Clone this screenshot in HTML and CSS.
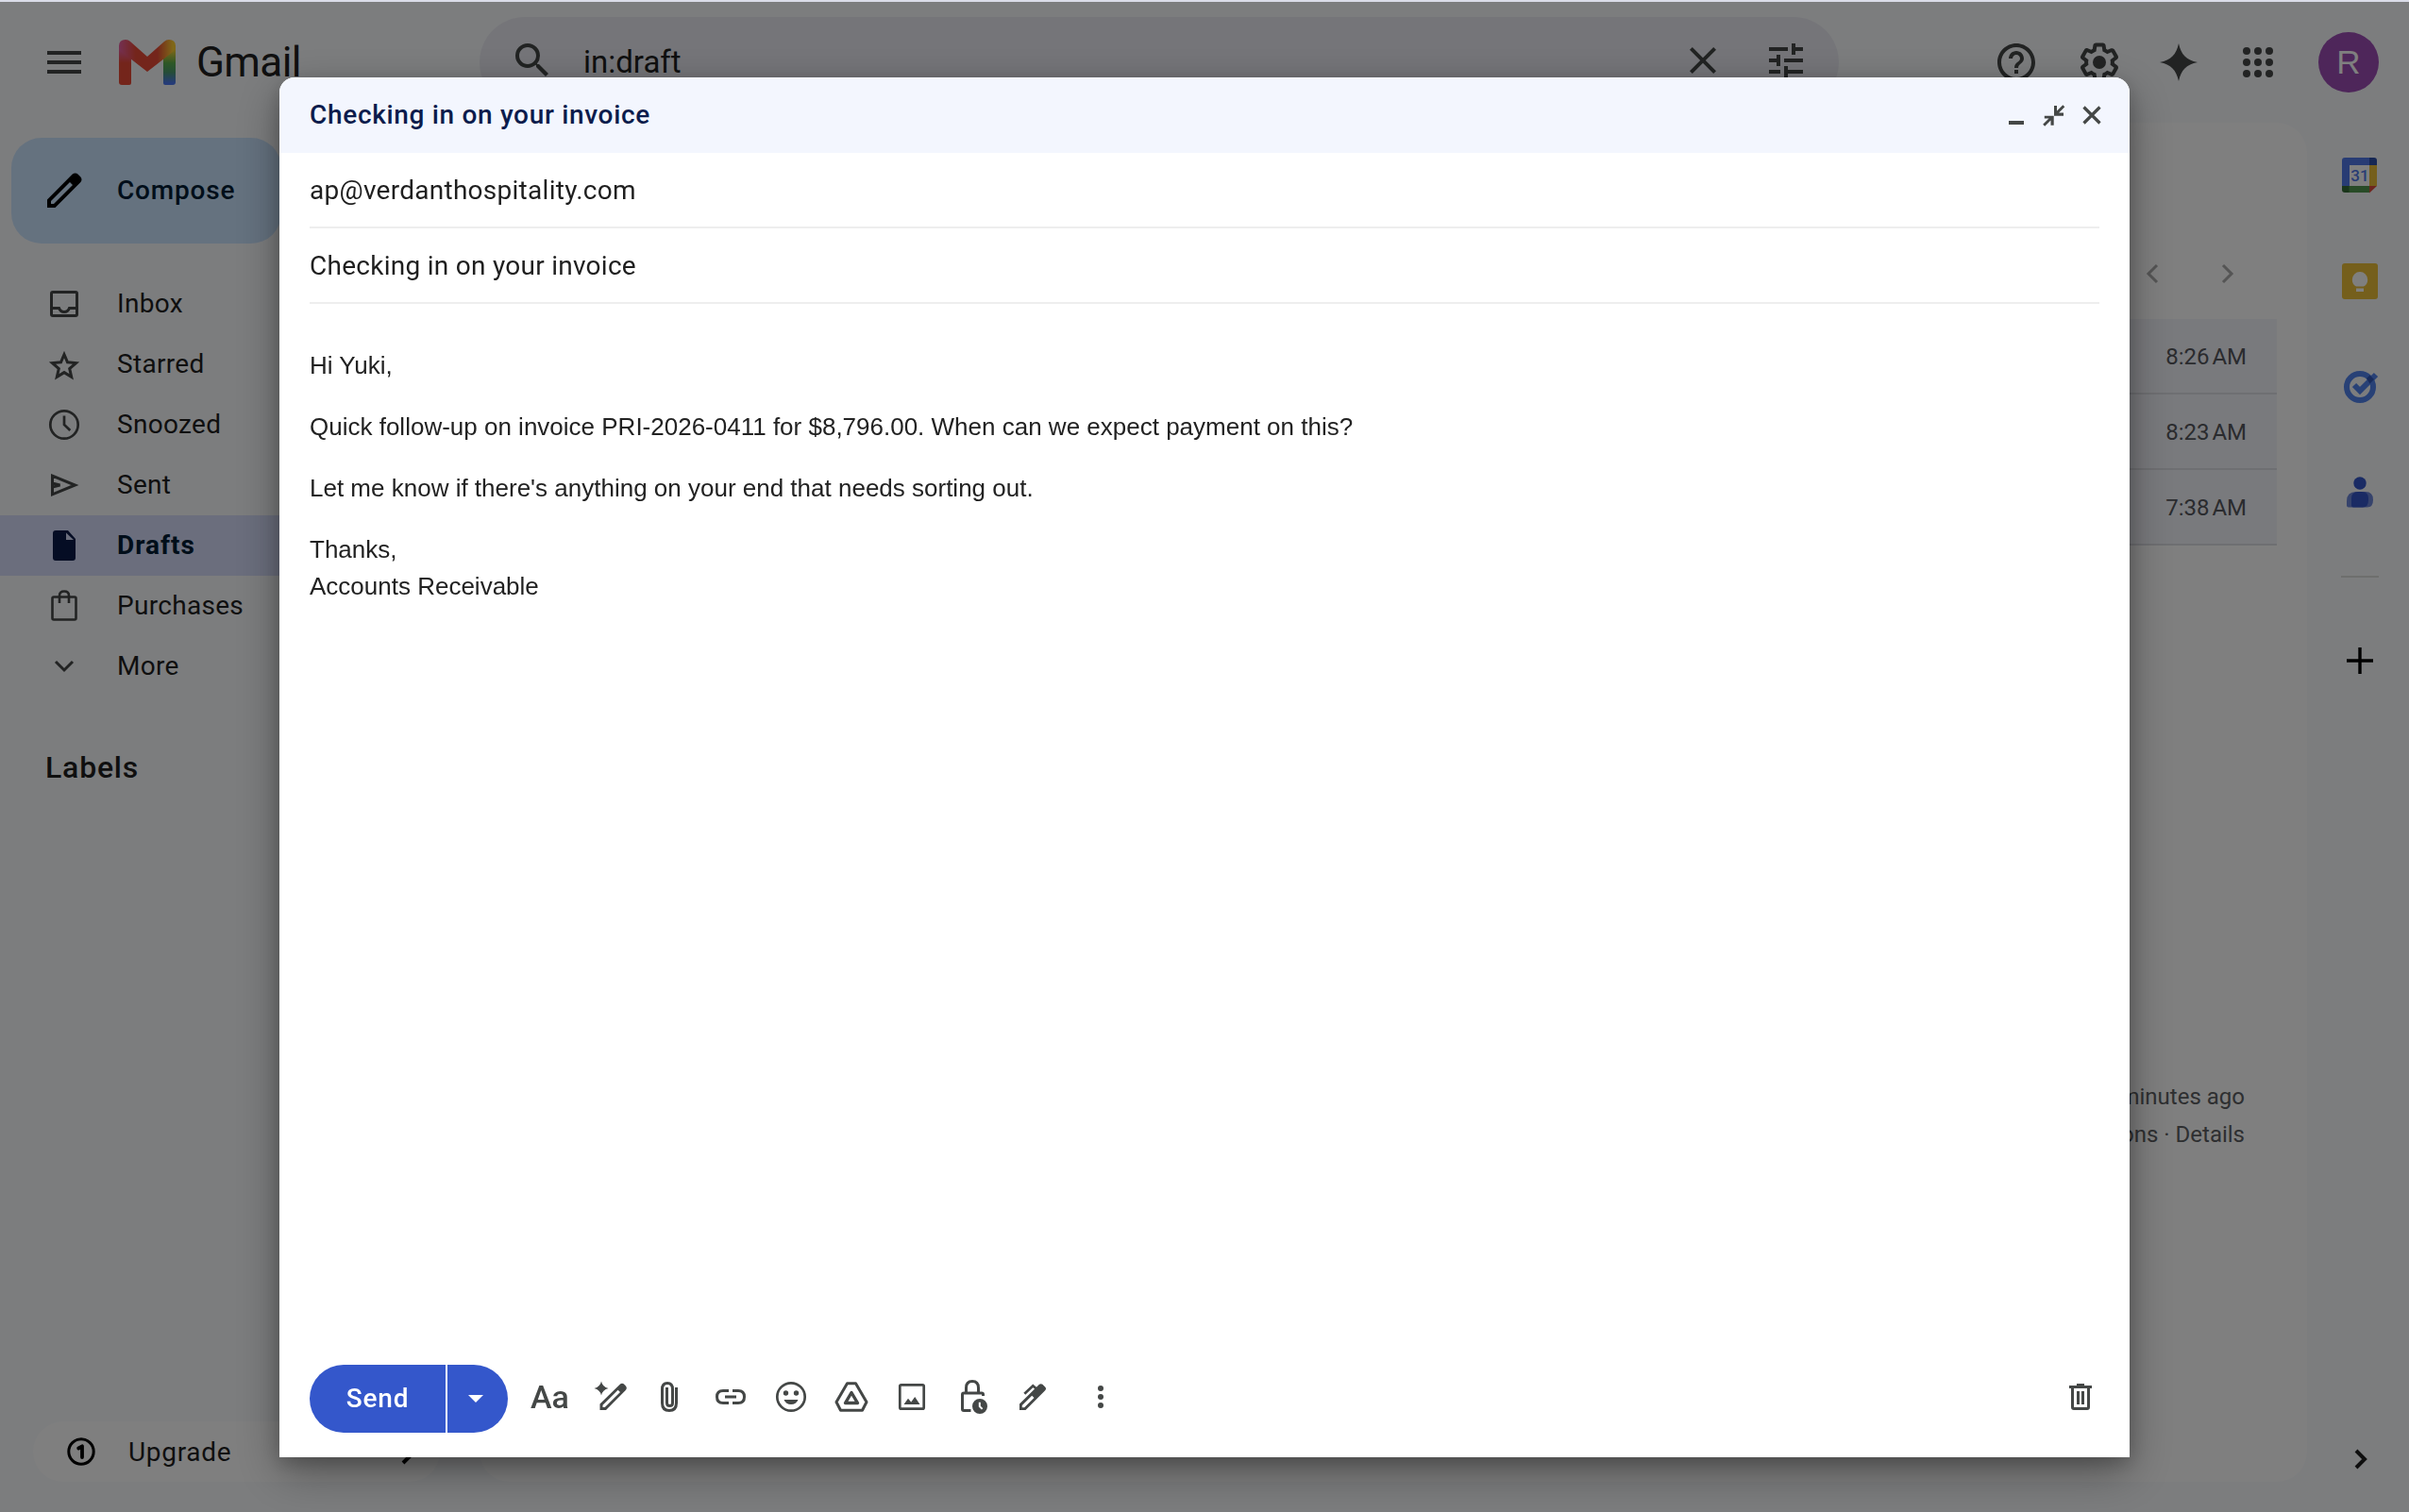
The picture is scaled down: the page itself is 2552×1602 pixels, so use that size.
FILE: index.html
```html
<!DOCTYPE html>
<html lang="en">
<head>
  <meta charset="UTF-8">
  <meta name="viewport" content="width=device-width, initial-scale=1.0">
  <title>Gmail</title>
  <link rel="stylesheet" href="styles.css">
</head>
<body>
  <div class="app">
    <header class="header">
      <div class="header-left">
        <svg class="icon" viewBox="0 0 24 24"><path d="M3 18h18v-2H3v2zm0-5h18v-2H3v2zm0-7v2h18V6H3z"/></svg>
        <svg class="logo" viewBox="0 0 60 48">
          <defs>
            <linearGradient id="legRight" x1="0" y1="0" x2="0" y2="1">
              <stop offset="0.1" stop-color="#ffcf30"/>
              <stop offset="0.45" stop-color="#5bb04c"/>
              <stop offset="0.68" stop-color="#4a9a70"/>
              <stop offset="0.95" stop-color="#4b77f0"/>
            </linearGradient>
            <linearGradient id="legTop" gradientUnits="userSpaceOnUse" x1="0" y1="4" x2="60" y2="4">
              <stop offset="0" stop-color="#e860a4"/>
              <stop offset="0.3" stop-color="#e84a36"/>
              <stop offset="0.68" stop-color="#e84a36"/>
              <stop offset="0.95" stop-color="#ffcf30"/>
            </linearGradient>
            <linearGradient id="legLeft" x1="0" y1="0" x2="0" y2="1">
              <stop offset="0.1" stop-color="#e860a4"/>
              <stop offset="0.45" stop-color="#e84a36"/>
            </linearGradient>
          </defs>
          <path fill="url(#legLeft)" d="M0 6h13v40q0 2-2 2H3q-3 0-3-3z"/>
          <path fill="url(#legRight)" d="M47 6h13v39q0 3-3 3h-8q-2 0-2-2z"/>
          <path fill="url(#legTop)" d="M0 7Q0 0 7 0q3 0 5 2l18 16L48 2q2-2 5-2 7 0 7 7 0 3-3 6L30 34 3 13Q0 10 0 7z"/>
        </svg>
        <span class="brand">Gmail</span>
      </div>
      <div class="search">
        <svg class="icon" viewBox="0 0 24 24"><path d="M15.5 14h-.79l-.28-.27A6.47 6.47 0 0 0 16 9.5 6.5 6.5 0 1 0 9.5 16c1.61 0 3.09-.59 4.23-1.57l.27.28v.79l5 4.99L20.49 19l-4.99-5zm-6 0C7.01 14 5 11.99 5 9.5S7.01 5 9.5 5 14 7.01 14 9.5 11.99 14 9.5 14z"/></svg>
        <span class="search-text">in:draft</span>
        <svg class="icon" viewBox="0 0 24 24"><path d="M19 6.41L17.59 5 12 10.59 6.41 5 5 6.41 10.59 12 5 17.59 6.41 19 12 13.41 17.59 19 19 17.59 13.41 12z"/></svg>
        <svg class="icon" viewBox="0 0 24 24"><path d="M3 17v2h6v-2H3zM3 5v2h10V5H3zm10 16v-2h8v-2h-8v-2h-2v6h2zM7 9v2H3v2h4v2h2V9H7zm14 4v-2H11v2h10zm-6-4h2V7h4V5h-4V3h-2v6z"/></svg>
      </div>
      <div class="header-right">
        <svg class="icon help" viewBox="0 0 24 24"><path d="M11 18h2v-2h-2v2zm1-16C6.48 2 2 6.48 2 12s4.48 10 10 10 10-4.48 10-10S17.52 2 12 2zm0 18c-4.41 0-8-3.59-8-8s3.59-8 8-8 8 3.59 8 8-3.59 8-8 8zm0-14c-2.21 0-4 1.79-4 4h2c0-1.1.9-2 2-2s2 .9 2 2c0 2-3 1.75-3 5h2c0-2.25 3-2.5 3-5 0-2.21-1.79-4-4-4z"/></svg>
        <svg class="icon settings" viewBox="0 0 24 24"><path d="M13.85 22.25h-3.7c-.74 0-1.36-.54-1.45-1.27l-.27-1.89c-.27-.14-.53-.29-.79-.46l-1.8.72c-.7.26-1.47-.03-1.81-.65L2.2 15.53c-.35-.66-.2-1.44.36-1.88l1.53-1.19c-.01-.15-.02-.3-.02-.46 0-.15.01-.31.02-.46l-1.52-1.19c-.59-.45-.74-1.26-.37-1.88l1.85-3.19c.34-.62 1.11-.9 1.79-.63l1.81.73c.26-.17.52-.32.78-.46l.27-1.91c.09-.7.71-1.25 1.44-1.25h3.7c.74 0 1.36.54 1.45 1.27l.27 1.89c.27.14.53.29.79.46l1.8-.72c.71-.26 1.48.03 1.82.65l1.84 3.18c.36.66.2 1.44-.36 1.88l-1.52 1.19c.01.15.02.3.02.46s-.01.31-.02.46l1.52 1.19c.56.45.72 1.23.37 1.86l-1.86 3.22c-.34.62-1.11.9-1.8.63l-1.8-.72c-.26.17-.52.32-.78.46l-.27 1.91c-.1.68-.72 1.22-1.46 1.22zm-3.23-2h2.76l.37-2.55.53-.22c.44-.18.88-.44 1.34-.78l.45-.34 2.38.96 1.38-2.4-2.03-1.58.07-.56c.03-.26.06-.51.06-.78s-.03-.53-.06-.78l-.07-.56 2.03-1.58-1.39-2.4-2.39.96-.45-.35c-.42-.32-.87-.58-1.33-.77l-.52-.22-.37-2.55h-2.76l-.37 2.55-.53.21c-.44.19-.88.44-1.34.79l-.45.33-2.38-.95-1.39 2.39 2.03 1.58-.07.56a7 7 0 0 0-.06.79c0 .26.02.53.06.78l.07.56-2.03 1.58 1.38 2.4 2.39-.96.45.35c.43.33.86.58 1.33.77l.53.22.38 2.55z"/><circle cx="12" cy="12" r="3.5"/></svg>
        <svg class="icon spark" viewBox="0 0 24 24"><path d="M12 2C13.300 8 16 10.700 22 12 16 13.300 13.300 16 12 22 10.700 16 8 13.300 2 12 8 10.700 10.700 8 12 2z"/></svg>
        <svg class="icon apps" viewBox="0 0 24 24"><circle cx="6" cy="6" r="2"/><circle cx="12" cy="6" r="2"/><circle cx="18" cy="6" r="2"/><circle cx="6" cy="12" r="2"/><circle cx="12" cy="12" r="2"/><circle cx="18" cy="12" r="2"/><circle cx="6" cy="18" r="2"/><circle cx="12" cy="18" r="2"/><circle cx="18" cy="18" r="2"/></svg>
        <div class="avatar">R</div>
      </div>
    </header>

    <div class="content">
      <aside class="sidebar">
        <div class="compose">
          <svg class="icon" viewBox="0 0 48 48"><path d="M6 42v-8.500L32.500 6.800q1.500-1.300 3.200-1.300t3 1.300l2.500 2.500q1.300 1.300 1.300 3t-1.300 3L14.500 42zM10 38h3L33 18l-3-3L10 35z"/></svg>
          <span>Compose</span>
        </div>
        <nav class="nav">
          <div class="nav-item">
            <svg class="nav-icon" viewBox="0 0 40 40"><path fill="none" stroke="currentColor" stroke-width="3" d="M8 7.500h24q1.500 0 1.500 1.500v22q0 1.500-1.500 1.500H8Q6.500 32.500 6.500 31V9Q6.500 7.500 8 7.500zM7 24.500h7.500q1.500 4 5.500 4t5.500-4H33"/></svg>
            <span>Inbox</span>
          </div>
          <div class="nav-item">
            <svg class="nav-icon" viewBox="0 0 40 40"><path fill="none" stroke="currentColor" stroke-width="3" d="M20 9.500l3.500 8.300 9 .8-6.800 5.900 2 8.800L20 28.600l-7.700 4.700 2-8.800-6.800-5.900 9-.8z"/></svg>
            <span>Starred</span>
          </div>
          <div class="nav-item">
            <svg class="nav-icon" viewBox="0 0 40 40"><circle cx="20" cy="20" r="14.700" fill="none" stroke="currentColor" stroke-width="2.700"/><path fill="none" stroke="currentColor" stroke-width="2.700" d="M20 10.500V20l6.300 6"/></svg>
            <span>Snoozed</span>
          </div>
          <div class="nav-item">
            <svg class="nav-icon" viewBox="0 0 40 40"><path fill="none" stroke="currentColor" stroke-width="3" d="M7.500 10.200L31.500 20 7.500 29.800zM7.500 18l8 2-8 2"/></svg>
            <span>Sent</span>
          </div>
          <div class="nav-item active">
            <svg class="nav-icon" viewBox="0 0 40 40"><path d="M10 4h14l8 9v20q0 3-3 3H11q-3 0-3-3V7q0-3 3-3zm12 2.500V14h8z" fill-rule="evenodd"/></svg>
            <span>Drafts</span>
          </div>
          <div class="nav-item">
            <svg class="nav-icon" viewBox="0 0 40 40"><path fill="none" stroke="currentColor" stroke-width="2.600" d="M9 10.500h22q1.500 0 1.500 1.500v21q0 1.500-1.500 1.500H9Q7.500 34.500 7.500 33V12q0-1.500 1.500-1.500zM15 17V9q0-4.500 5-4.500T25 9v8"/></svg>
            <span>Purchases</span>
          </div>
          <div class="nav-item">
            <svg class="nav-icon" viewBox="0 0 40 40"><path fill="none" stroke="currentColor" stroke-width="3" d="M11 15l9 9 9-9"/></svg>
            <span>More</span>
          </div>
        </nav>
        <div class="labels">Labels</div>
        <div class="upgrade">
          <svg class="upgrade-icon" viewBox="0 0 32 32"><circle cx="16" cy="16" r="13.200" fill="none" stroke="#000" stroke-width="3"/><path fill="none" stroke="#000" stroke-width="3.800" stroke-linecap="round" stroke-linejoin="round" d="M13.200 12.500L17 10.300V22"/></svg>
          <span>Upgrade</span>
          <svg class="icon upgrade-next" viewBox="0 0 48 48"><path fill="none" stroke="#000" stroke-width="4" d="M18 12l12 12-12 12"/></svg>
        </div>
      </aside>

      <main class="main">
        <div class="pager">
          <svg class="icon" viewBox="0 0 48 48"><path fill="none" stroke="currentColor" stroke-width="3" d="M29 15l-9 9 9 9"/></svg>
          <svg class="icon" viewBox="0 0 48 48"><path fill="none" stroke="currentColor" stroke-width="3" d="M19 15l9 9-9 9"/></svg>
        </div>
        <div class="mail-list">
          <div class="mail-row">8:26 AM</div>
          <div class="mail-row">8:23 AM</div>
          <div class="mail-row">7:38 AM</div>
        </div>
        <footer class="footer">
          <div>minutes ago</div>
          <div class="footer-links">ons · Details</div>
        </footer>
      </main>

      <aside class="rail">
        <svg class="icon" viewBox="0 0 48 48">
          <path fill="#fff" d="M10 10h28v28H10z"/>
          <path fill="#5079e8" d="M5 8q0-3 3-3h26v8H13v22H5z"/>
          <path fill="#2d4fa8" d="M34 5h5q3 0 3 3v5h-8z"/>
          <path fill="#eabf38" d="M34 13h8v22h-8z"/>
          <path fill="#50964f" d="M12 35h22v7H12z"/>
          <path fill="#356b36" d="M5 35h7.500v7H8q-3 0-3-3z"/>
          <path fill="#da4c3c" d="M34 35h8l-8 7.500z"/>
          <text x="24" y="29.500" text-anchor="middle" class="cal-day">31</text>
        </svg>
        <svg class="icon" viewBox="0 0 48 48">
          <rect x="5" y="5" width="38" height="38" rx="3" fill="#eabf38"/>
          <path fill="#fff" d="M20 29.500c-3-1.500-4.200-4-4.200-7.300a8.200 8.200 0 0 1 16.400 0c0 3.300-1.200 5.800-4.200 7.300zM20 31.500h8v3.500h-8z"/>
        </svg>
        <svg class="icon" viewBox="0 0 48 48">
          <circle cx="24" cy="24" r="14" fill="none" stroke="#5083ed" stroke-width="6"/>
          <path fill="none" stroke="#5083ed" stroke-width="6" d="M18 22l6 6 17-17"/>
          <path fill="#2f56b8" d="M31 15l3.500-3.500 4.500 4.500-4.500 4.500z"/>
        </svg>
        <svg class="icon" viewBox="0 0 48 48">
          <circle cx="24" cy="14" r="6.700" fill="#3557c8"/>
          <path fill="#6d86d8" d="M20 23h10q8 0 8 8.500T31 39.500H12q-2 0-2-2V33q0-10 10-10z"/>
          <path fill="#3557c8" d="M22 23h4q7 0 7 7v2q0 7.500-6 7.500H17q-2 0-2-2V30q0-7 7-7z"/>
        </svg>
        <div class="rail-divider"></div>
        <svg class="icon" viewBox="0 0 48 48"><path stroke="#000" stroke-width="3.400" d="M24 10v28M10 24h28"/></svg>
        <svg class="icon rail-toggle" viewBox="0 0 48 48"><path fill="none" stroke="#1f1f1f" stroke-width="4" d="M20 15l9 9-9 9"/></svg>
      </aside>
    </div>
  </div>

  <div class="overlay">
    <section class="dialog">
      <div class="dialog-header">
        <h2 class="dialog-title">Checking in on your invoice</h2>
        <svg class="dialog-icon" viewBox="0 0 32 32"><path d="M8 22h16v4H8z"/></svg>
        <svg class="dialog-icon" viewBox="0 0 32 32"><path d="M16 6h3v5.600l6.300-6.300 2 2-6.200 6.200H26v3.200H16zM15.700 16.700v10h-3.200v-5.300l-6.300 6.300-2-2 6.300-6.200H5.800v-2.800z"/></svg>
        <svg class="dialog-icon" viewBox="0 0 32 32"><path fill="none" stroke="currentColor" stroke-width="3.200" d="M7.500 7.500l17 17M24.500 7.500l-17 17"/></svg>
      </div>
      <div class="field">ap@verdanthospitality.com</div>
      <div class="field">Checking in on your invoice</div>
      <div class="message">
        <p>Hi Yuki,</p>
        <p>Quick follow-up on invoice PRI-2026-0411 for $8,796.00. When can we expect payment on this?</p>
        <p>Let me know if there's anything on your end that needs sorting out.</p>
        <p>Thanks,<br>Accounts Receivable</p>
      </div>
      <div class="toolbar">
        <div class="send">
          <div class="send-main">Send</div>
          <div class="send-more"><svg class="caret" viewBox="0 0 16 8"><path d="M0 0h16L8 8z"/></svg></div>
        </div>
        <div class="tools">
          <span class="tool format">Aa</span>
          <svg class="tool" viewBox="-1.500 0 40 40"><path d="M9.500 3.500q1.200 6 7.500 7.500-6.300 1.500-7.500 7.500Q8.300 12.500 2 11q6.300-1.500 7.500-7.500zM8 34v-6.500L29 7q1.200-1.200 2.500-1.200T34 7l1 1q1.300 1.300 1.300 2.700T35 13.300L14.500 34zM11 31h2.300L29.500 15l-2.400-2.300L11 28.700z" fill-rule="evenodd"/></svg>
          <svg class="tool" viewBox="0 0 40 40"><path fill="none" stroke="currentColor" stroke-width="3" d="M26.500 10v16.500q0 8-7.500 8t-7.500-8V12q0-6.500 5.500-6.500t5.500 6.500v14.500q0 3-3 3t-3-3V10"/></svg>
          <svg class="tool" viewBox="0 0 40 40"><path fill="none" stroke="currentColor" stroke-width="3" d="M18 13.500h-6q-6.500 0-6.500 6.500t6.500 6.500h6M22 13.500h6q6.500 0 6.500 6.500T28 26.500h-6M14 20h12"/></svg>
          <svg class="tool" viewBox="0 0 40 40"><circle cx="20" cy="20" r="14.700" fill="none" stroke="currentColor" stroke-width="2.700"/><circle cx="14.500" cy="16" r="2.700"/><circle cx="25.500" cy="16" r="2.700"/><path d="M12.500 23h15q-2 5-7.500 5t-7.500-5z"/></svg>
          <svg class="tool" viewBox="0 0 40 40"><path fill="none" stroke="currentColor" stroke-width="3" stroke-linejoin="round" d="M15.500 5.700h9L36 25.500l-4.500 8.800h-23L4 25.500z"/><path fill="none" stroke="currentColor" stroke-width="3.400" stroke-linejoin="round" d="M20 15.500l6.500 11h-13z"/></svg>
          <svg class="tool" viewBox="0 0 40 40"><rect x="7.300" y="7.300" width="25.400" height="25.400" rx="1.500" fill="none" stroke="currentColor" stroke-width="2.700"/><path d="M11.500 28l4.500-6.300 3.200 3.800 4-5.500 5.300 8z"/></svg>
          <svg class="tool" viewBox="0 0 40 40"><path fill="none" stroke="currentColor" stroke-width="3" d="M18.500 34.500H11Q9.500 34.500 9.500 33V17.500Q9.500 16 11 16h19q1.500 0 1.500 1.500V19M13.500 15v-4.500q0-7 6.500-7t6.500 7V15"/><path fill-rule="evenodd" d="M28 22a8 8 0 1 0 0 16 8 8 0 0 0 0-16zm-1.200 3.800h2v4l2.500 2.400-1.400 1.400-3.100-3z"/></svg>
          <svg class="tool" viewBox="0 0 40 40"><path fill-rule="evenodd" d="M6 34v-6.500L27 6.800q1.700-1.300 3.400 0l3 3q1.500 1.500 0 3.300L12.500 34zM8.800 31.300h2.400L21.500 21l-2.300-2.300L8.800 29z"/><path fill="none" stroke="currentColor" stroke-width="2.800" d="M11.300 16.800l9-8.500 4.500 4"/></svg>
          <svg class="tool dots" viewBox="0 0 40 40"><circle cx="20" cy="11" r="3"/><circle cx="20" cy="20" r="3"/><circle cx="20" cy="29" r="3"/></svg>
        </div>
        <svg class="tool trash" viewBox="0 0 40 40"><path fill="none" stroke="currentColor" stroke-width="3" d="M11.500 9v22q0 1.500 1.500 1.500h14q1.500 0 1.500-1.500V9"/><path d="M8 8h8V6h8v2h8v3H8zM16 14h3v14h-3zM21 14h3v14h-3z"/></svg>
      </div>
    </section>
  </div>
</body>
</html>
```
FILE: styles.css
```css
* {
  box-sizing: border-box;
}

html, body {
  margin: 0;
  padding: 0;
  height: 100%;
  overflow: hidden;
  background: #dadce8;
  font-family: Roboto, "Liberation Sans", sans-serif;
  font-size: 28px;
  color: #1f1f1f;
}

.app {
  height: 100%;
  border-top: 2px solid #dadce8;
  background: #f8fafd;
  display: flex;
  flex-direction: column;
}

.icon {
  width: 48px;
  height: 48px;
  fill: currentColor;
  flex: none;
}

/* header */
.header {
  height: 128px;
  flex: none;
  display: flex;
  align-items: center;
  color: #444746;
}

.header-left {
  width: 508px;
  padding-left: 44px;
  display: flex;
  align-items: center;
}

.logo {
  width: 60px;
  height: 48px;
  margin-left: 34px;
}

.brand {
  margin-left: 22px;
  font-size: 44px;
  letter-spacing: -0.6px;
  color: #202020;
}

.search {
  width: 1440px;
  height: 96px;
  padding: 0 32px;
  border-radius: 48px;
  background: #eaebf2;
  display: flex;
  align-items: center;
}

.search-text {
  flex: 1;
  margin-left: 30px;
  padding-bottom: 2px;
  font-size: 33px;
  color: #1f1f1f;
}

.search .icon {
  margin-bottom: 4px;
}

.search .icon + .icon {
  margin-left: 40px;
}

.header-right {
  display: flex;
  align-items: center;
}

.help { margin-left: 164px; }
.settings { margin-left: 40px; }
.spark, .apps { margin-left: 36px; }

.avatar {
  width: 64px;
  height: 64px;
  margin-left: 40px;
  border-radius: 50%;
  background: #9c4cb4;
  color: #fff;
  font-family: "Liberation Sans", Arial, sans-serif;
  font-size: 35px;
  display: flex;
  align-items: center;
  justify-content: center;
}

.content {
  flex: 1;
  min-height: 0;
  display: flex;
  padding-bottom: 32px;
}

/* sidebar */
.sidebar {
  width: 508px;
  flex: none;
  display: flex;
  flex-direction: column;
}

.compose {
  width: 286px;
  height: 112px;
  margin: 16px 0 0 12px;
  padding-left: 32px;
  border-radius: 32px;
  background: #cae4fe;
  color: #001d35;
  font-weight: 500;
  letter-spacing: 0.8px;
  display: flex;
  align-items: center;
  gap: 32px;
}

.compose .icon {
  fill: #000;
}

.compose span {
  padding-bottom: 2px;
}

.nav {
  margin-top: 32px;
}

.nav-item {
  height: 64px;
  padding-left: 48px;
  letter-spacing: 0.3px;
  display: flex;
  align-items: center;
  gap: 36px;
}

.nav-item span {
  padding-bottom: 2px;
}

.nav-item.active {
  background: #d6ddfa;
  color: #001d35;
  font-weight: 700;
  letter-spacing: 1px;
}

.nav-icon {
  width: 40px;
  height: 40px;
  color: #444746;
  fill: currentColor;
}

.active .nav-icon {
  color: #0b1a48;
}

.labels {
  margin: 43px 0 0 48px;
  line-height: 65px;
  font-size: 32px;
  font-weight: 500;
  letter-spacing: 0.8px;
}

.upgrade {
  width: 431px;
  height: 64px;
  margin: auto 0 0 35px;
  padding-left: 35px;
  border-radius: 32px;
  background: #fefefe;
  display: flex;
  align-items: center;
}

.upgrade-icon {
  width: 32px;
  height: 32px;
}

.upgrade span {
  flex: 1;
  margin-left: 34px;
  letter-spacing: 0.7px;
}

.upgrade-next {
  margin-right: 9px;
}

/* mail list */
.main {
  flex: 1;
  border-radius: 32px;
  background: #fefefe;
  color: #5c5e62;
}

.pager {
  height: 208px;
  padding: 0 60px 24px 0;
  display: flex;
  align-items: flex-end;
  justify-content: flex-end;
  gap: 32px;
  color: #aaa;
}

.mail-list {
  margin-right: 32px;
}

.mail-row {
  height: 80px;
  padding-right: 32px;
  border-bottom: 2px solid #dddee4;
  background: #f3f4fb;
  color: #55575c;
  font-size: 24px;
  font-weight: 400;
  line-height: 80px;
  text-align: right;
  word-spacing: -3px;
}

.footer {
  margin-top: 564px;
  padding-right: 66px;
  font-size: 24px;
  line-height: 40px;
  text-align: right;
}

/* side panel */
.rail {
  width: 108px;
  flex: none;
  padding: 32px 0 0 4px;
  display: flex;
  flex-direction: column;
  align-items: center;
  gap: 64px;
}

.cal-day {
  font-size: 17px;
  font-weight: 500;
  fill: #5079e8;
}

.rail-divider {
  width: 40px;
  height: 2px;
  background: #dcdedb;
}

.rail-toggle {
  margin-top: auto;
}

/* compose dialog */
.overlay {
  position: fixed;
  top: 2px;
  right: 0;
  bottom: 0;
  left: 0;
  padding: 80px 296px 58px;
  background: rgba(0, 0, 0, 0.5);
  display: flex;
}

.dialog {
  flex: 1;
  display: flex;
  flex-direction: column;
  overflow: hidden;
  border-radius: 16px 16px 0 0;
  background: #fff;
  box-shadow: 0 16px 48px rgba(0, 0, 0, 0.34), 0 6px 20px rgba(0, 0, 0, 0.2);
}

.dialog-header {
  height: 80px;
  padding: 0 24px 0 32px;
  background: #f3f6fe;
  display: flex;
  align-items: center;
  gap: 8px;
}

.dialog-title {
  flex: 1;
  margin: 0;
  padding-bottom: 2px;
  font-size: 28px;
  font-weight: 500;
  letter-spacing: 0.68px;
  color: #0c1c4c;
}

.dialog-icon {
  width: 32px;
  height: 32px;
  color: #444746;
  fill: currentColor;
}

.field {
  height: 80px;
  margin: 0 32px;
  border-bottom: 2px solid #eee;
  line-height: 80px;
  letter-spacing: 0.27px;
}

.message {
  flex: 1;
  padding: 46px 32px 0;
  font-family: "Liberation Sans", Arial, sans-serif;
  font-size: 26px;
  line-height: 39px;
  color: #222;
}

.message p {
  margin: 0 0 26px;
}

.toolbar {
  padding: 0 32px 26px;
  display: flex;
  align-items: center;
}

.send {
  height: 72px;
  display: flex;
  gap: 2px;
  color: #fff;
  font-weight: 500;
}

.send-main, .send-more {
  background: #3457cb;
  display: flex;
  align-items: center;
  justify-content: center;
}

.send-main {
  width: 144px;
  padding-bottom: 2px;
  border-radius: 36px 0 0 36px;
  letter-spacing: 0.8px;
}

.send-more {
  width: 64px;
  padding-right: 4px;
  border-radius: 0 36px 36px 0;
}

.caret {
  width: 16px;
  height: 8px;
  fill: #fff;
}

.tools {
  flex: 1;
  margin-left: 24px;
  display: flex;
  align-items: center;
  gap: 24px;
}

.tool {
  width: 40px;
  height: 40px;
  margin-bottom: 4px;
  color: #444746;
  fill: currentColor;
}

.format {
  font-size: 34px;
  font-weight: 500;
  line-height: 40px;
}

.dots {
  margin-left: 8px;
}
```
